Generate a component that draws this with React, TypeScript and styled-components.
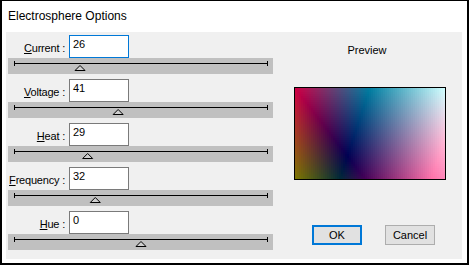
import React from 'react';
import styled, { createGlobalStyle } from 'styled-components';

const GlobalStyle = createGlobalStyle`
    html, body {
        margin: 0;
        padding: 0;
        background: #ffffff;
    }
    * {
        box-sizing: border-box;
    }
`;

const Window =
    styled.div`
        width: 469px;
        height: 265px;
        background: #ffffff;
        border-style: solid;
        border-color: #000000;
        border-width: 1px 2px 2px 2px;
        display: flex;
        flex-direction: column;
        font-family: "Liberation Sans", Arial, sans-serif;
        color: #000000;
    `

const TitleBar =
    styled.div`
        height: 31px;
        padding: 8px 0 0 6px;
        font-size: 12px;
        line-height: 14px;
    `

const Panel =
    styled.div`
        height: 227px;
        margin: 0 5px 0 4px;
        background: #f0f0f0;
        display: flex;
    `

const LeftColumn =
    styled.div`
        width: 267px;
        padding: 3px 0 0 2px;
        display: flex;
        flex-direction: column;
        gap: 5px;
    `

const Setting =
    styled.div`
        display: flex;
        flex-direction: column;
    `

const FieldRow =
    styled.div`
        height: 23px;
        display: flex;
        align-items: center;
    `

const Label =
    styled.label`
        width: 58px;
        text-align: right;
        font-size: 11px;
        padding-right: 1px;
        padding-top: 2px;
        letter-spacing: -0.2px;
        white-space: nowrap;
    `

const Field =
    styled.div<{ $focused?: boolean }>`
        width: 60px;
        height: 23px;
        margin-left: 3px;
        background: #ffffff;
        border: 1px solid ${p => p.$focused ? '#0078d7' : '#7a7a7a'};
        font-size: 11px;
        line-height: 13px;
        padding: 2px 3px;
    `

const Band =
    styled.div`
        width: 265px;
        height: 16px;
        background: #c0c0c0;
    `

const RightColumn =
    styled.div`
        flex: 1;
        padding: 12px 0 0 5px;
        display: flex;
        flex-direction: column;
        align-items: center;
    `

const Caption =
    styled.div`
        font-size: 11px;
        line-height: 13px;
        margin-right: 6px;
    `

const PreviewFrame =
    styled.div`
        width: 152px;
        height: 93px;
        margin-top: 30px;
        border: 1px solid #000000;
        display: flex;
    `

const ButtonRow =
    styled.div`
        display: flex;
        gap: 23px;
        margin-top: 45px;
        margin-left: 7px;
    `

const Button =
    styled.button<{ $default?: boolean }>`
        width: 50px;
        height: 20px;
        padding: 0;
        background: #e1e1e1;
        border: ${p => p.$default ? '2px solid #0078d7' : '1px solid #adadad'};
        font-family: "Liberation Sans", Arial, sans-serif;
        font-size: 11px;
        color: #000000;
    `

interface SliderProps {
    value: number;
    min: number;
    max: number;
}

const Slider: React.FC<SliderProps> = ({ value, min, max }) => {
    const cx = 6 + ((value - min) / (max - min)) * 254;
    return (
        <Band>
            <svg width="265" height="16" shapeRendering="crispEdges">
                <line x1="6" y1="5.5" x2="260" y2="5.5" stroke="#000" />
                <line x1="6.5" y1="3" x2="6.5" y2="8" stroke="#000" />
                <line x1="259.5" y1="3" x2="259.5" y2="8" stroke="#000" />
                <polygon
                    points={`${cx},7.5 ${cx - 5},12.5 ${cx + 5},12.5`}
                    fill="#cfcfcf"
                    stroke="#000"
                    shapeRendering="auto"
                />
            </svg>
        </Band>
    );
};

// plasma-ish preview, each channel a simple function of x / y
const PreviewImage = () => {
    const w = 150;
    const h = 91;
    const cell = 2;
    const clamp = (v: number) => Math.max(0, Math.min(255, Math.round(v * 255)));
    const cells = [];
    for (let j = 0; j < h; j += cell) {
        for (let i = 0; i < w; i += cell) {
            const x = (i + cell / 2) / w;
            const y = (j + cell / 2) / h;
            const r = Math.abs(1.64 * (x - 0.5 + 0.2 * y));
            const g = Math.abs(x - 0.467 * y);
            const b = 0.27 + 0.73 * x - 0.27 * y;
            cells.push(
                <rect key={`${i}-${j}`} x={i} y={j} width={cell} height={cell}
                      fill={`rgb(${clamp(r)},${clamp(g)},${clamp(b)})`} />
            );
        }
    }
    return (
        <svg width={w} height={h} shapeRendering="crispEdges">
            {cells}
        </svg>
    );
};

const settings = [
    { key: 'C', rest: 'urrent', value: 26, min: 0, max: 100, focused: true },
    { key: 'V', rest: 'oltage', value: 41, min: 0, max: 100 },
    { key: 'H', rest: 'eat', value: 29, min: 0, max: 100 },
    { key: 'F', rest: 'requency', value: 32, min: 0, max: 100 },
    { key: 'H', rest: 'ue', value: 0, min: -180, max: 180 },
];

export default function App() {
    return (
        <>
            <GlobalStyle />
            <Window>
                <TitleBar>Electrosphere Options</TitleBar>
                <Panel>
                    <LeftColumn>
                        {settings.map((s, idx) => (
                            <Setting key={idx}>
                                <FieldRow>
                                    <Label><u>{s.key}</u>{s.rest} :</Label>
                                    <Field $focused={s.focused}>{s.value}</Field>
                                </FieldRow>
                                <Slider value={s.value} min={s.min} max={s.max} />
                            </Setting>
                        ))}
                    </LeftColumn>
                    <RightColumn>
                        <Caption>Preview</Caption>
                        <PreviewFrame>
                            <PreviewImage />
                        </PreviewFrame>
                        <ButtonRow>
                            <Button $default>OK</Button>
                            <Button>Cancel</Button>
                        </ButtonRow>
                    </RightColumn>
                </Panel>
            </Window>
        </>
    );
}
